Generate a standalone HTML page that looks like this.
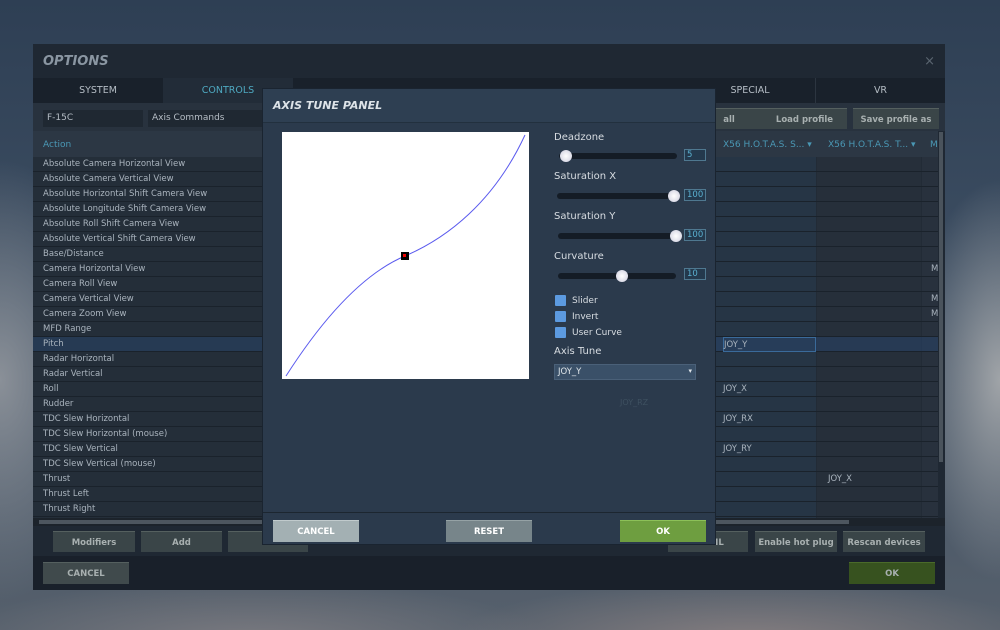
<!DOCTYPE html>
<html><head><meta charset="utf-8"><style>
*{margin:0;padding:0;box-sizing:border-box}
body{width:1000px;height:630px;overflow:hidden;position:relative;font-family:"DejaVu Sans","Liberation Sans",sans-serif;font-size:9px;color:#aab4be;
background:radial-gradient(ellipse 120px 220px at 0px 380px,#8a9098,transparent),radial-gradient(ellipse 90px 200px at 1000px 380px,#a0a4a8,transparent),radial-gradient(ellipse 300px 60px at 250px 640px,#7a7a80,transparent),radial-gradient(ellipse 300px 60px at 750px 640px,#857e80,transparent),linear-gradient(#2e3f54,#3f5064 50%,#56606c);}
.a{position:absolute}
.win{left:33px;top:44px;width:912px;height:546px;background:#1f2833}
.btn{position:absolute;background:#3a4548;border-top:1px solid #55605f;color:#a8b0b0;font-weight:bold;font-size:8.5px;text-align:center;line-height:22px}
.row{position:absolute;left:0;width:905px;height:15px;border-bottom:1px solid #1a222b;line-height:14px;padding-left:10px;font-size:8.5px}
.lab{position:absolute;color:#d8dde2;font-size:10px}
.trk{position:absolute;height:6px;border-radius:3px;background:#141c26;width:118px}
.knob{position:absolute;width:12px;height:12px;border-radius:6px;background:radial-gradient(#fff,#ccd);top:-3px}
.num{position:absolute;width:22px;height:12px;border:1px solid #4f7890;background:#24394d;color:#5ab0d0;font-size:8.5px;line-height:10px;padding-left:2px}
.cb{position:absolute;width:11px;height:11px;background:#5c9ae0;border-radius:1px}
</style></head><body>
<div class="a win">
 <div class="a" style="left:10px;top:10px;font-size:13px;font-weight:bold;font-style:italic;color:#8a96a2">OPTIONS</div>
 <div class="a" style="right:10px;top:10px;font-size:13px;color:#5a6570">×</div>
 <div class="a" style="left:0;top:34px;width:912px;height:25px;background:#19212b"></div>
 <div class="a" style="left:0;top:34px;width:130px;height:25px;line-height:25px;text-align:center;color:#b5bdc5;font-size:9.5px">SYSTEM</div>
 <div class="a" style="left:130px;top:34px;width:130px;height:25px;line-height:25px;text-align:center;color:#4ea8c0;font-size:9.5px;background:#222c38">CONTROLS</div>
 <div class="a" style="left:652px;top:34px;width:130px;height:25px;line-height:25px;text-align:center;color:#b5bdc5;font-size:9.5px">SPECIAL</div>
 <div class="a" style="left:782px;top:34px;width:130px;height:25px;line-height:25px;text-align:center;color:#b5bdc5;font-size:9.5px;border-left:1px solid #2c3540">VR</div>
 <div class="a" style="left:0;top:59px;width:912px;height:28px;background:#28323e"></div>
 <div class="a" style="left:10px;top:66px;width:100px;height:17px;background:#1f2832;padding:3px 4px;color:#b5bdc5">F-15C</div>
 <div class="a" style="left:115px;top:66px;width:120px;height:17px;background:#1f2832;padding:3px 4px;color:#b5bdc5">Axis Commands</div>
 <div class="btn" style="left:660px;top:64px;width:72px;height:21px">all</div>
 <div class="btn" style="left:729px;top:64px;width:85px;height:21px">Load profile</div>
 <div class="btn" style="left:820px;top:64px;width:86px;height:21px">Save profile as</div>
 <div class="a" style="left:0;top:87px;width:905px;height:26px;background:#2c3744"></div>
 <div class="a" style="left:10px;top:96px;color:#4a98b5">Action</div>
 <div class="a" style="left:690px;top:96px;color:#4a98b5">X56 H.O.T.A.S. S... ▾</div>
 <div class="a" style="left:795px;top:96px;color:#4a98b5">X56 H.O.T.A.S. T... ▾</div>
 <div class="a" style="left:897px;top:96px;color:#4a98b5">M</div>
 <div class="a" style="left:683px;top:113px;width:100px;height:361px;background:#233a52"></div>
 <div class="a" style="left:783px;top:113px;width:105px;height:361px;background:#242c36;border-left:1px solid #1a222b"></div>
 <div class="a" style="left:888px;top:113px;width:17px;height:361px;background:#28313c;border-left:1px solid #1a222b"></div>
 <div class="a" style="left:906px;top:88px;width:4px;height:330px;background:#4a535c"></div>
 <div class="a" style="left:0;top:113px;width:905px;height:361px;background:rgba(40,50,62,.6)">
  <div class="row" style="top:0">Absolute Camera Horizontal View</div>
  <div class="row" style="top:15px">Absolute Camera Vertical View</div>
  <div class="row" style="top:30px">Absolute Horizontal Shift Camera View</div>
  <div class="row" style="top:45px">Absolute Longitude Shift Camera View</div>
  <div class="row" style="top:60px">Absolute Roll Shift Camera View</div>
  <div class="row" style="top:75px">Absolute Vertical Shift Camera View</div>
  <div class="row" style="top:90px">Base/Distance</div>
  <div class="row" style="top:105px">Camera Horizontal View<span class="a" style="left:898px">M</span></div>
  <div class="row" style="top:120px">Camera Roll View</div>
  <div class="row" style="top:135px">Camera Vertical View<span class="a" style="left:898px">M</span></div>
  <div class="row" style="top:150px">Camera Zoom View<span class="a" style="left:898px">M</span></div>
  <div class="row" style="top:165px">MFD Range</div>
  <div class="row" style="top:180px;background:rgba(40,70,110,.5)">Pitch<span class="a" style="left:690px;top:0;width:93px;border:1px solid #3a6a9a;height:15px;padding-left:0">JOY_Y</span></div>
  <div class="row" style="top:195px">Radar Horizontal</div>
  <div class="row" style="top:210px">Radar Vertical</div>
  <div class="row" style="top:225px">Roll<span class="a" style="left:690px">JOY_X</span></div>
  <div class="row" style="top:240px">Rudder</div>
  <div class="row" style="top:255px">TDC Slew Horizontal<span class="a" style="left:690px">JOY_RX</span></div>
  <div class="row" style="top:270px">TDC Slew Horizontal (mouse)</div>
  <div class="row" style="top:285px">TDC Slew Vertical<span class="a" style="left:690px">JOY_RY</span></div>
  <div class="row" style="top:300px">TDC Slew Vertical (mouse)</div>
  <div class="row" style="top:315px">Thrust<span class="a" style="left:795px">JOY_X</span></div>
  <div class="row" style="top:330px">Thrust Left</div>
  <div class="row" style="top:345px">Thrust Right</div>
 </div>
 <div class="a" style="left:0;top:474px;width:912px;height:8px;background:#1c232b"></div>
 <div class="a" style="left:6px;top:476px;width:810px;height:4px;background:#4d565f"></div>
 <div class="btn" style="left:20px;top:487px;width:82px;height:21px">Modifiers</div>
 <div class="btn" style="left:108px;top:487px;width:81px;height:21px">Add</div>
 <div class="btn" style="left:195px;top:487px;width:80px;height:21px">C</div>
 <div class="btn" style="left:635px;top:487px;width:80px;height:21px">&nbsp;&nbsp;&nbsp;&nbsp;TML</div>
 <div class="btn" style="left:722px;top:487px;width:82px;height:21px">Enable hot plug</div>
 <div class="btn" style="left:810px;top:487px;width:82px;height:21px">Rescan devices</div>
 <div class="a" style="left:0;top:512px;width:912px;height:34px;background:#19202a"></div>
 <div class="btn" style="left:10px;top:518px;width:86px;height:22px;background:#404a4c">CANCEL</div>
 <div class="btn" style="left:816px;top:518px;width:86px;height:22px;background:#37521f;border-top-color:#4a6a2a">OK</div>
</div>
<div class="a" style="left:262px;top:88px;width:454px;height:457px;background:#2b3a4c;border:1px solid #1a2430">
 <div class="a" style="left:0;top:0;width:452px;height:34px;background:#2e3f52;border-bottom:1px solid #22303e"></div>
 <div class="a" style="left:10px;top:10px;font-size:11px;font-weight:bold;font-style:italic;color:#dde3e8">AXIS TUNE PANEL</div>
 <svg class="a" style="left:19px;top:43px" width="247" height="247"><rect width="247" height="247" fill="#fff"/><path d="M4,244 C45,180 85,140 123,124 C165,106 212,70 243,3" fill="none" stroke="#5a5aee" stroke-width="1"/><rect x="119" y="120" width="8" height="8" fill="#000"/><rect x="121" y="122" width="3" height="3" fill="#e00"/></svg>
 <div class="lab" style="left:291px;top:43px">Deadzone</div>
 <div class="trk" style="left:296px;top:64px"><div class="knob" style="left:1px"></div></div>
 <div class="num" style="left:421px;top:60px">5</div>
 <div class="lab" style="left:291px;top:82px">Saturation X</div>
 <div class="trk" style="left:294px;top:104px"><div class="knob" style="left:111px"></div></div>
 <div class="num" style="left:421px;top:100px">100</div>
 <div class="lab" style="left:291px;top:122px">Saturation Y</div>
 <div class="trk" style="left:295px;top:144px"><div class="knob" style="left:112px"></div></div>
 <div class="num" style="left:421px;top:140px">100</div>
 <div class="lab" style="left:291px;top:162px">Curvature</div>
 <div class="trk" style="left:295px;top:184px"><div class="knob" style="left:58px"></div></div>
 <div class="num" style="left:421px;top:179px">10</div>
 <div class="cb" style="left:292px;top:206px"></div><div class="lab" style="left:309px;top:207px;font-size:9px">Slider</div>
 <div class="cb" style="left:292px;top:222px"></div><div class="lab" style="left:309px;top:223px;font-size:9px">Invert</div>
 <div class="cb" style="left:292px;top:238px"></div><div class="lab" style="left:309px;top:239px;font-size:9px">User Curve</div>
 <div class="lab" style="left:291px;top:257px">Axis Tune</div>
 <div class="a" style="left:291px;top:275px;width:142px;height:16px;background:#3a5068;border:1px solid #4a6078;color:#e0e6ea;font-size:8.5px;padding:2px 3px">JOY_Y<span style="float:right;font-size:7px">▾</span></div>
 <div class="a" style="left:357px;top:309px;color:#3e5060;font-size:8px">JOY_RZ</div>
 <div class="a" style="left:0;top:423px;width:452px;height:1px;background:#1c2630"></div>
 <div class="btn" style="left:10px;top:431px;width:86px;height:22px;background:#a3b0b3;border-top-color:#c0cacc;color:#fff">CANCEL</div>
 <div class="btn" style="left:183px;top:431px;width:86px;height:22px;background:#77858a;border-top-color:#95a2a5;color:#fff">RESET</div>
 <div class="btn" style="left:357px;top:431px;width:86px;height:22px;background:#6e9e40;border-top-color:#8cc058;color:#fff">OK</div>
</div>
</body></html>
